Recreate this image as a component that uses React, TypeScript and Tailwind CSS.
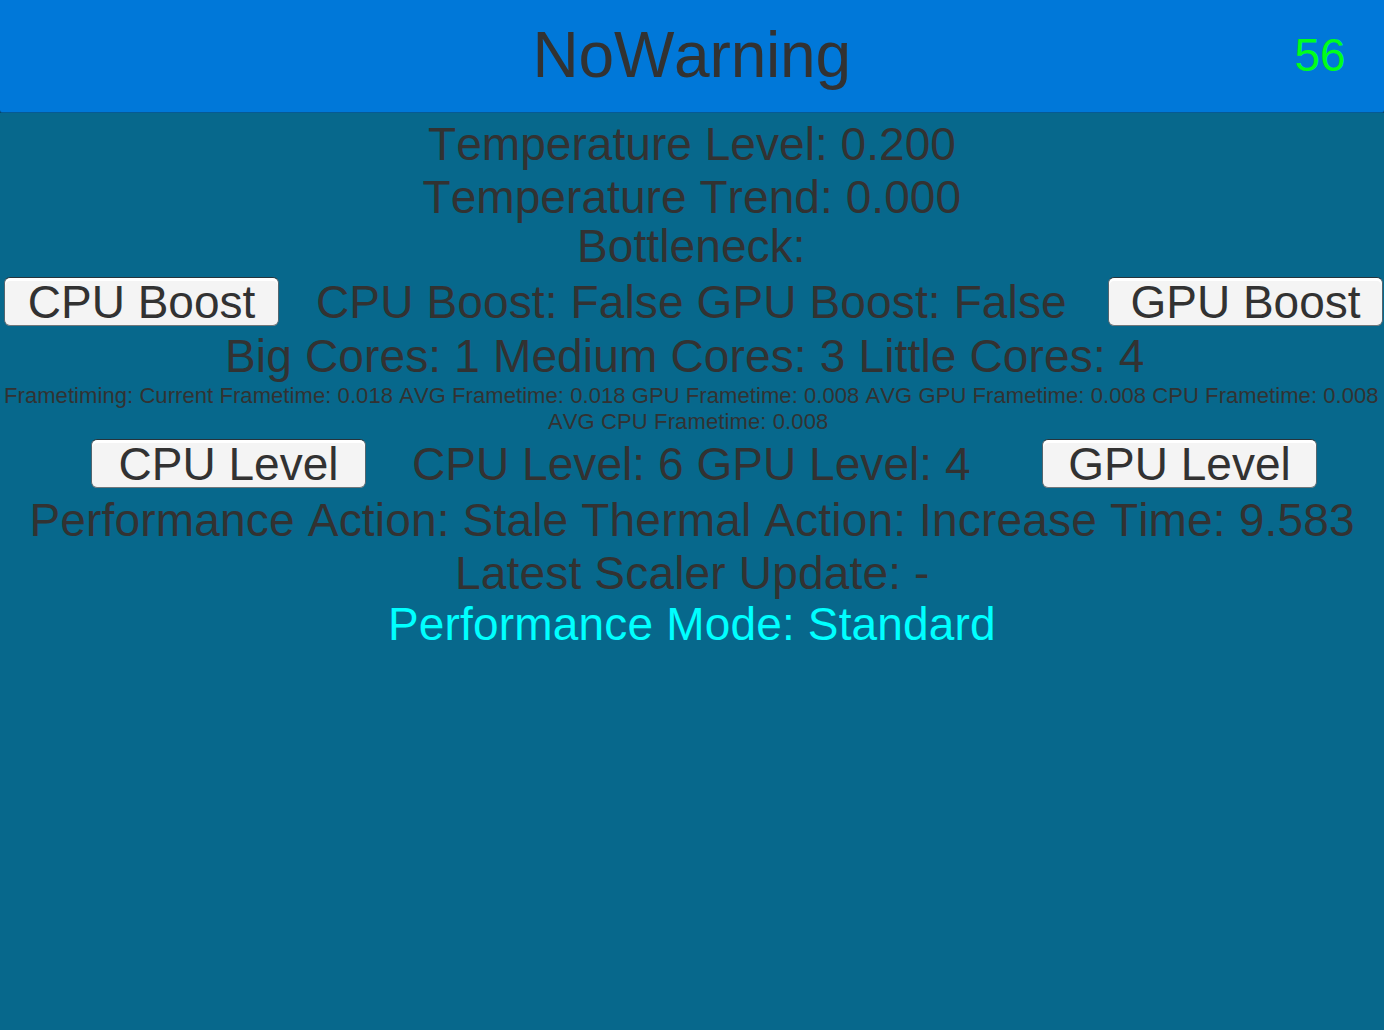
import React from "react";

type RowProps = { children: React.ReactNode; className: string };

function Row({ children, className }: RowProps) {
  return <div className={`flex shrink-0 items-center whitespace-pre text-[46px] leading-none ${className}`}>{children}</div>;
}

function ActionButton({ label }: { label: string }) {
  return (
    <button className="flex h-[49px] w-[275px] shrink-0 items-center justify-center rounded-[6px] border border-[#53656e] border-t-[#26343c] border-b-[#70777b] bg-[#f4f4f4] tracking-normal shadow-[inset_0_3px_0_#ffffff]">
      {label}
    </button>
  );
}

export default function App() {
  return (
    <main className="flex h-[1030px] w-[1384px] flex-col overflow-hidden bg-[#07688c] font-['Liberation_Sans',sans-serif] text-[#323232] [font-kerning:none]">
      <div className="h-[113px] shrink-0 bg-[#08456b]">
        <header className="flex h-[113px] items-center rounded-b-[3px] border-b border-[#075a94] bg-[#0078d9] pb-[2px] leading-none">
          <h1 className="w-[1294.5px] pl-[532.5px] text-[64px] tracking-[-0.2px]">NoWarning</h1>
          <span className="text-[46px] text-[#00ff1a]">56</span>
        </header>
      </div>
      <Row className="h-[62px] pl-[428px] tracking-[0.05px]"><span>Temperature Level: 0.200</span></Row>
      <Row className="h-[44px] pl-[422.5px] tracking-[0.07px]"><span>Temperature Trend: 0.000</span></Row>
      <Row className="h-[54px] pl-[577px] tracking-[0.1px]"><span>Bottleneck:</span></Row>
      <Row className="h-[57px] pl-1 tracking-[0.13px]">
        <ActionButton label="CPU Boost" />
        <span className="w-[829px] pl-[37px]">CPU Boost: False GPU Boost: False</span>
        <ActionButton label="GPU Boost" />
      </Row>
      <Row className="h-[51px] pl-[225px] tracking-[0.155px]"><span>Big Cores: 1 Medium Cores: 3 Little Cores: 4</span></Row>
      <div className="flex h-[54px] shrink-0 flex-col whitespace-pre pt-[2px] text-[22px] leading-[26px]">
        <span className="pl-1 tracking-[0.072px]">Frametiming: Current Frametime: 0.018 AVG Frametime: 0.018 GPU Frametime: 0.008 AVG GPU Frametime: 0.008 CPU Frametime: 0.008</span>
        <span className="pl-[548px] tracking-[0.12px]">AVG CPU Frametime: 0.008</span>
      </div>
      <Row className="h-[57px] pl-[91px] tracking-[0.05px]">
        <ActionButton label="CPU Level" />
        <span className="w-[676px] pl-[46px]">CPU Level: 6 GPU Level: 4</span>
        <ActionButton label="GPU Level" />
      </Row>
      <Row className="h-[55px] pl-[29.5px] tracking-[0.18px]"><span>Performance Action: Stale Thermal Action: Increase Time: 9.583</span></Row>
      <Row className="h-[52px] pl-[455px] tracking-[0.18px]"><span>Latest Scaler Update: -</span></Row>
      <Row className="h-[49px] pl-[388px] tracking-[0.17px] text-[#00ffff]"><span>Performance Mode: Standard</span></Row>
    </main>
  );
}
